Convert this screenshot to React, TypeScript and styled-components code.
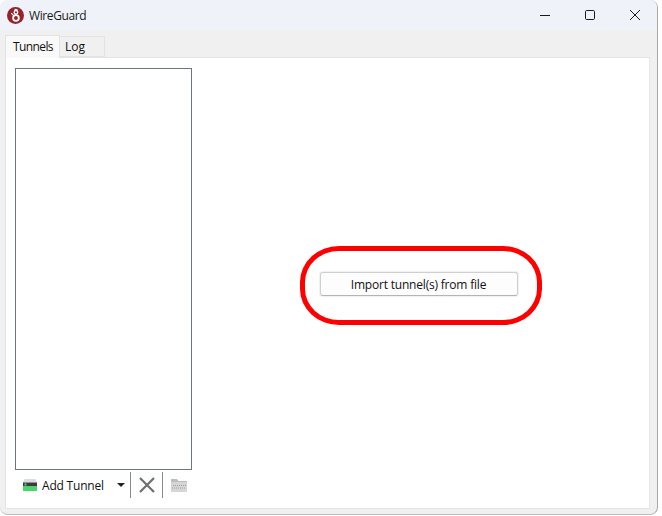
import React, { FC } from 'react';
import styled, { createGlobalStyle } from 'styled-components';

const GlobalStyle = createGlobalStyle`
  html, body {
    margin: 0;
    padding: 0;
    background: #ffffff;
    font-family: 'Open Sans', 'Noto Sans', sans-serif;
  }

  #root {
    width: 662px;
    height: 516px;
  }
`;

const App: FC = () => (
  <>
    <GlobalStyle />
    <Window>
      <TitleBar>
        <AppIcon viewBox="0 0 18 18">
          <circle cx="9" cy="9" r="9" fill="#94232a" />
          <circle cx="9.5" cy="11.6" r="3" fill="none" stroke="#fff" strokeWidth="1.9" />
          <circle cx="9.5" cy="5.6" r="1.9" fill="none" stroke="#fff" strokeWidth="1.4" />
          <path d="M4.5 6.5 L7.4 9.4 M8 2.4 L11 3" stroke="#fff" strokeWidth="1.3" />
        </AppIcon>
        <Title>WireGuard</Title>
        <WindowControls>
          <ControlButton aria-label="Minimize">
            <svg width="12" height="12" viewBox="0 0 12 12">
              <path d="M1 6.5h10" stroke="#1a1a1a" strokeWidth="1" />
            </svg>
          </ControlButton>
          <ControlButton aria-label="Maximize">
            <svg width="12" height="12" viewBox="0 0 12 12">
              <rect x="1.5" y="1.5" width="9" height="9" rx="1.2" fill="none" stroke="#1a1a1a" strokeWidth="1" />
            </svg>
          </ControlButton>
          <ControlButton aria-label="Close">
            <svg width="12" height="12" viewBox="0 0 12 12">
              <path d="M1 1l10 10M11 1L1 11" stroke="#1a1a1a" strokeWidth="1" />
            </svg>
          </ControlButton>
        </WindowControls>
      </TitleBar>

      <Body>
        <TabRow>
          <Tab active>Tunnels</Tab>
          <Tab>Log</Tab>
        </TabRow>
        <TabPanel>
          <LeftColumn>
            <TunnelList />
            <Toolbar>
              <AddTunnel>
                <svg width="16" height="14" viewBox="0 0 16 14">
                  <path d="M2.5 1h11l1.5 3.5H1z" fill="#dcdcdc" />
                  <rect x="1" y="4.5" width="14" height="4" fill="#3a3a3a" />
                  <rect x="2.5" y="5.5" width="2" height="2" fill="#35e860" />
                  <rect x="1" y="8.5" width="14" height="4.5" fill="#42d968" />
                </svg>
                <AddLabel>Add Tunnel</AddLabel>
                <Caret />
              </AddTunnel>
              <Separator />
              <IconSlot>
                <svg width="16" height="16" viewBox="0 0 16 16">
                  <path d="M1 1l14 14M15 1L1 15" stroke="#6e6e6e" strokeWidth="2.2" />
                </svg>
              </IconSlot>
              <Separator />
              <IconSlot>
                <svg width="18" height="15" viewBox="0 0 18 15">
                  <path d="M1 1h6l1.5 2H17v2H1z" fill="#bdbdbd" />
                  <rect x="1" y="4" width="16" height="10" fill="#d6d6d6" />
                  <path d="M3 7.5h13M2 10h13" stroke="#9c9c9c" strokeWidth="1" strokeDasharray="1 1" />
                </svg>
              </IconSlot>
            </Toolbar>
          </LeftColumn>
          <DetailPane>
            <ImportButton>Import tunnel(s) from file</ImportButton>
          </DetailPane>
        </TabPanel>
      </Body>

      <Annotation />
    </Window>
  </>
);

const Window = styled.div`
  position: relative;
  box-sizing: border-box;
  width: 658px;
  height: 515px;
  border-right: 1px solid #a9a9a9;
  border-bottom: 1px solid #bdbdbd;
  border-radius: 8px;
  overflow: hidden;
  display: flex;
  flex-direction: column;
  background: #f0f0f0;
`;

const TitleBar = styled.div`
  height: 30px;
  flex: none;
  display: flex;
  align-items: center;
  padding: 0 0 0 7px;
  background: #eff3f9;
`;

const AppIcon = styled.svg`
  width: 17px;
  height: 17px;
  flex: none;
`;

const Title = styled.span`
  margin-left: 5px;
  font-size: 12px;
  letter-spacing: -0.4px;
  color: #1a1a1a;
`;

const WindowControls = styled.div`
  margin-left: auto;
  display: flex;
`;

const ControlButton = styled.div`
  width: 45px;
  height: 30px;
  display: flex;
  align-items: center;
  justify-content: center;
`;

const Body = styled.div`
  flex: 1;
  display: flex;
  flex-direction: column;
  padding: 5px 7px 5px 5px;
  min-height: 0;
`;

const TabRow = styled.div`
  display: flex;
  height: 22px;
  flex: none;
  align-items: flex-end;
  position: relative;
  z-index: 1;
`;

const Tab = styled.div<{ active?: boolean }>`
  box-sizing: border-box;
  height: ${(props) => (props.active ? '23px' : '21px')};
  padding-left: ${(props) => (props.active ? '7px' : '5px')};
  padding-bottom: ${(props) => (props.active ? '2px' : '0')};
  width: ${(props) => (props.active ? '55px' : '45px')};
  margin-bottom: ${(props) => (props.active ? '-1px' : '0')};
  display: flex;
  align-items: center;
  font-size: 12px;
  letter-spacing: ${(props) => (props.active ? '-0.6px' : '0')};
  color: #111111;
  background: ${(props) => (props.active ? '#f9f9f9' : '#f0f0f0')};
  border: 1px solid #e3e3e3;
  border-bottom: ${(props) => (props.active ? 'none' : '1px solid #e3e3e3')};
  border-left-width: ${(props) => (props.active ? '1px' : '0')};
`;

const TabPanel = styled.div`
  flex: 1;
  min-height: 0;
  display: flex;
  background: #ffffff;
  border: 1px solid #e3e3e3;
  border-right-color: #e8e8e8;
`;

const LeftColumn = styled.div`
  width: 186px;
  box-sizing: border-box;
  flex: none;
  display: flex;
  flex-direction: column;
  padding: 10px 0 0 9px;
`;

const TunnelList = styled.div`
  box-sizing: border-box;
  height: 402px;
  border: 1px solid #6a7585;
  background: #ffffff;
`;

const Toolbar = styled.div`
  height: 26px;
  margin-top: 2px;
  display: flex;
  align-items: center;
`;

const AddTunnel = styled.div`
  width: 115px;
  flex: none;
  box-sizing: border-box;
  padding-left: 7px;
  display: flex;
  align-items: center;
  gap: 4px;
  font-size: 12px;
  color: #111111;
`;

const AddLabel = styled.span`
  letter-spacing: -0.2px;
`;

const Caret = styled.i`
  margin-left: auto;
  margin-right: 5px;
  width: 0;
  height: 0;
  border-left: 4px solid transparent;
  border-right: 4px solid transparent;
  border-top: 4px solid #222222;
`;

const Separator = styled.div`
  width: 1px;
  height: 26px;
  background: #8a8a8a;
  flex: none;
`;

const IconSlot = styled.div`
  width: 31px;
  height: 26px;
  flex: none;
  display: flex;
  align-items: center;
  justify-content: center;
`;

const DetailPane = styled.div`
  flex: 1;
  display: flex;
  align-items: center;
  justify-content: center;
  padding-right: 4px;
  padding-top: 2px;
`;

const ImportButton = styled.div`
  box-sizing: border-box;
  width: 198px;
  height: 24px;
  display: flex;
  align-items: center;
  justify-content: center;
  font-size: 12px;
  letter-spacing: -0.2px;
  color: #111111;
  background: #fdfdfd;
  border: 1px solid #d0d0d0;
  border-bottom-color: #b4b4b4;
  border-radius: 3px;
  box-shadow: 0 0 0 1px #f1f1f1;
`;

const Annotation = styled.div`
  position: absolute;
  left: 300px;
  top: 246px;
  box-sizing: border-box;
  width: 242px;
  height: 79px;
  border: 5px solid #ff0000;
  border-radius: 39px / 36px;
  pointer-events: none;
`;

export default App;
